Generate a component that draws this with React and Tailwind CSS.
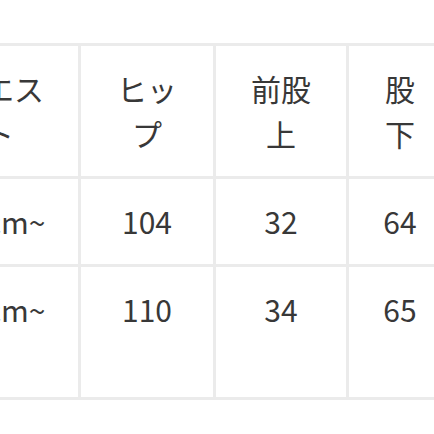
export default function App() {
  const font = { fontFamily: '"Noto Sans CJK JP", "Noto Sans", sans-serif' };
  const cell = "bg-white pt-5 text-center text-[30px] leading-[45px] text-[#383838] whitespace-nowrap";
  return (
    <div className="w-[434px] h-[434px] overflow-hidden bg-white relative" style={font}>
      <div className="pt-[43px] ml-[-83px]">
        <div className="grid w-max grid-cols-[158px_132px_130px_102px] grid-rows-[130px_85px_130px] gap-[3px] border-[3px] border-[#ebebeb] bg-[#ebebeb]">
          <div className={cell}>ウエス<br />ト</div>
          <div className={cell}>ヒッ<br />プ</div>
          <div className={cell}>前股<br />上</div>
          <div className={cell}>股<br />下</div>

          <div className={cell}>63cm~</div>
          <div className={cell}>104</div>
          <div className={cell}>32</div>
          <div className={cell}>64</div>

          <div className={cell}>66cm~</div>
          <div className={cell}>110</div>
          <div className={cell}>34</div>
          <div className={cell}>65</div>
        </div>
      </div>
    </div>
  );
}
